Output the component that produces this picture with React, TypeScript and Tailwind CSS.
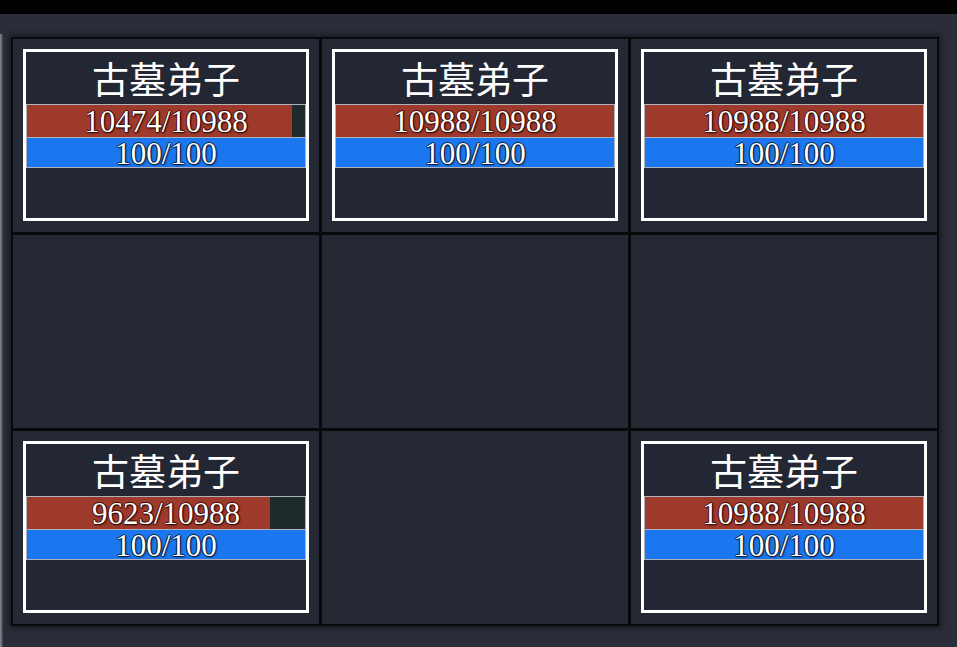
import React from "react";

type Unit = { hp: number; maxHp: number; mp: number; maxMp: number } | null;

const units: Unit[] = [
  { hp: 10474, maxHp: 10988, mp: 100, maxMp: 100 },
  { hp: 10988, maxHp: 10988, mp: 100, maxMp: 100 },
  { hp: 10988, maxHp: 10988, mp: 100, maxMp: 100 },
  null,
  null,
  null,
  { hp: 9623, maxHp: 10988, mp: 100, maxMp: 100 },
  null,
  { hp: 10988, maxHp: 10988, mp: 100, maxMp: 100 },
];

function Card({ u }: { u: NonNullable<Unit> }) {
  const pct = (u.hp / u.maxHp) * 100;
  return (
    <div className="w-[286px] h-[172px] border-[3px] border-white bg-[#232733] flex flex-col">
      <div
        className="h-[52px] flex items-center justify-center text-white text-[37px] leading-none"
        style={{ fontFamily: '"Noto Sans CJK SC", "Noto Sans", sans-serif' }}
      >
        古墓弟子
      </div>
      <div className="border border-[#aeb3bb]">
        <div className="relative h-[32px] bg-[#1f2a2b]">
          <div className="absolute left-0 top-0 bottom-0 bg-[#9e3a2b]" style={{ width: `${pct}%` }} />
          <div
            className="relative h-full flex items-center justify-center pt-[2px] text-white text-[31px] leading-[30px] [text-shadow:1px_0_0_#3a0d08,-1px_0_0_#3a0d08,0_1px_0_#3a0d08,0_-1px_0_#3a0d08,1px_1px_2px_#2a0805]"
            style={{ fontFamily: '"Liberation Serif", "Times New Roman", serif' }}
          >
            {u.hp}/{u.maxHp}
          </div>
        </div>
        <div className="h-[1px] bg-[#aeb3bb]" />
        <div className="relative h-[29px] bg-[#1a77ef]">
          <div
            className="relative h-full flex items-center justify-center pt-[2px] text-white text-[31px] leading-[27px] [text-shadow:1px_0_0_#0a1f45,-1px_0_0_#0a1f45,0_1px_0_#0a1f45,0_-1px_0_#0a1f45,1px_1px_2px_#081a3a]"
            style={{ fontFamily: '"Liberation Serif", "Times New Roman", serif' }}
          >
            {u.mp}/{u.maxMp}
          </div>
        </div>
      </div>
      <div className="flex-1" />
    </div>
  );
}

export default function App() {
  return (
    <div className="w-[957px] h-[647px] bg-[#2a2e39] flex flex-col overflow-hidden">
      <div className="h-[14px] bg-black shrink-0" />
      <div className="flex flex-1">
        <div className="w-[3px] mt-[20px] bg-gradient-to-r from-[#8a8e96] to-[#3a3e48]" />
        <div className="ml-[8px] mt-[23px]">
          <div className="grid grid-cols-[306px_306px_306px] grid-rows-[193px_193px_193px] gap-[3px] p-[2px] bg-[#08090b] shadow-[0_0_6px_2px_rgba(0,0,0,0.45)]">
            {units.map((u, i) => (
              <div key={i} className="bg-[#252934] p-[10px]">
                {u && <Card u={u} />}
              </div>
            ))}
          </div>
        </div>
      </div>
    </div>
  );
}
